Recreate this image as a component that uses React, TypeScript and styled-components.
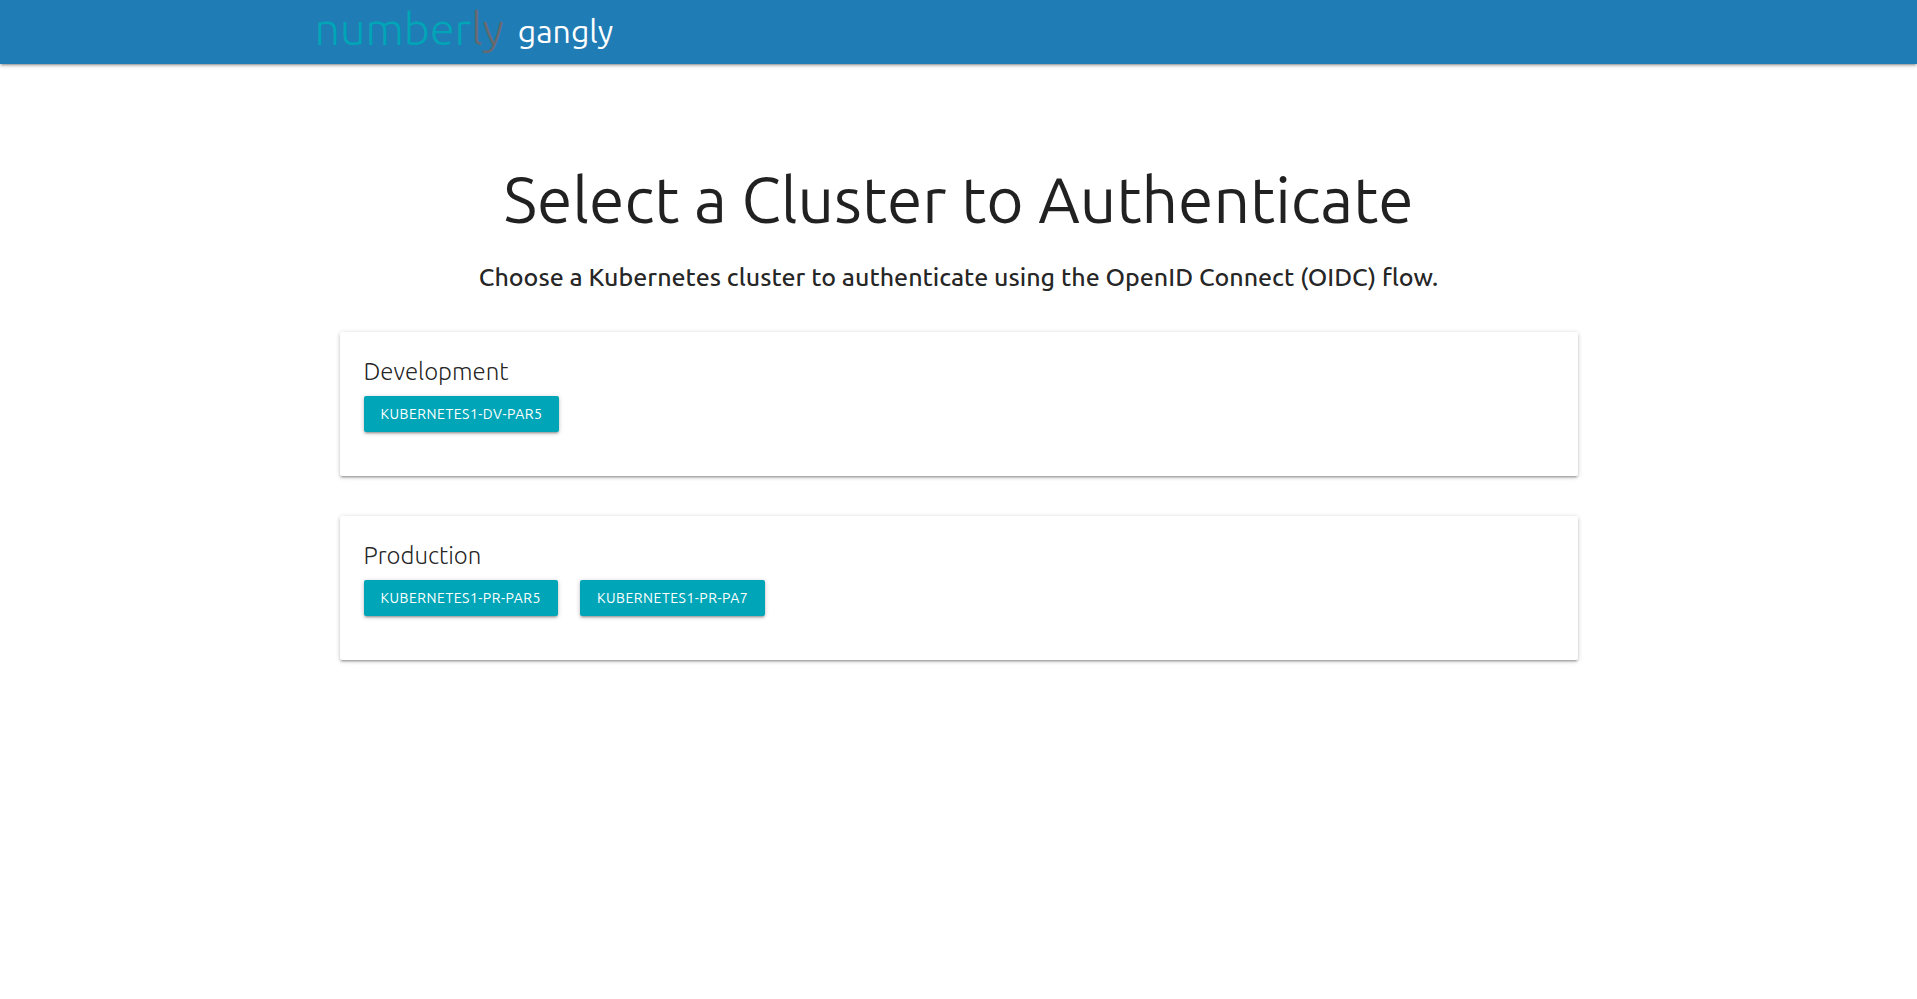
import React from "react";
import styled, { createGlobalStyle } from "styled-components";

const GlobalStyle = createGlobalStyle`
  *, *::before, *::after { box-sizing: border-box; }
  body {
    margin: 0;
    background: #fff;
    color: rgba(0, 0, 0, 0.87);
    font-family: Ubuntu, "Noto Sans", sans-serif;
  }
`;

const shadow =
  "0 2px 2px 0 rgba(0,0,0,0.14), 0 3px 1px -2px rgba(0,0,0,0.12), 0 1px 5px 0 rgba(0,0,0,0.2)";

const NavBar = styled.nav`
  height: 64px;
  background: #1f7cb5;
  box-shadow: ${shadow};
`;

const Container = styled.div`
  width: 70%;
  max-width: 1280px;
  margin: 0 auto;
`;

const NavContainer = styled(Container)`
  display: flex;
  align-items: flex-start;
`;

const Brand = styled.a`
  display: flex;
  gap: 14px;
  margin-left: -4px;
  color: #fff;
  font-size: 32px;
  line-height: 62px;
  text-decoration: none;
`;

const Logo = styled.span`
  color: #00a6b7;
  font-size: 45px;
  font-weight: 300;
  line-height: 58px;
`;

const LogoTail = styled.span`
  color: #6a696e;
`;

const Main = styled(Container).attrs({ as: "main" })`
  padding: 101px 21px 40px;
`;

const Title = styled.h1`
  margin: 0 0 30px;
  font-size: 64px;
  font-weight: 400;
  line-height: 68px;
  text-align: center;
`;

const Subtitle = styled.h2`
  margin: 0 0 41px;
  font-size: 25px;
  font-weight: 500;
  line-height: 28px;
  text-align: center;
`;

const Cards = styled.div`
  display: flex;
  flex-direction: column;
  gap: 40px;
`;

const Card = styled.section`
  padding: 24px 24px 44px;
  border-radius: 2px;
  background: #fff;
  box-shadow: ${shadow};
`;

const CardTitle = styled.h3`
  margin: 0 0 8px;
  font-size: 24px;
  font-weight: 300;
  line-height: 32px;
`;

const ClusterList = styled.div`
  display: flex;
  flex-wrap: wrap;
  gap: 22px;
`;

const ClusterLink = styled.a`
  height: 36px;
  padding: 0 17px;
  border-radius: 2px;
  background: #00a6b7;
  box-shadow: ${shadow};
  color: #fff;
  font-size: 14px;
  line-height: 36px;
  letter-spacing: 0.5px;
  text-decoration: none;
  text-transform: uppercase;
`;

const environments = [
  { name: "Development", clusters: ["kubernetes1-dv-par5"] },
  { name: "Production", clusters: ["kubernetes1-pr-par5", "kubernetes1-pr-pa7"] },
];

export default function App() {
  return (
    <>
      <GlobalStyle />
      <NavBar>
        <NavContainer>
          <Brand href="#">
            <Logo>
              number<LogoTail>ly</LogoTail>
            </Logo>
            gangly
          </Brand>
        </NavContainer>
      </NavBar>
      <Main>
        <Title>Select a Cluster to Authenticate</Title>
        <Subtitle>
          Choose a Kubernetes cluster to authenticate using the OpenID Connect (OIDC) flow.
        </Subtitle>
        <Cards>
          {environments.map((env) => (
            <Card key={env.name}>
              <CardTitle>{env.name}</CardTitle>
              <ClusterList>
                {env.clusters.map((cluster) => (
                  <ClusterLink key={cluster} href={`#${cluster}`}>
                    {cluster}
                  </ClusterLink>
                ))}
              </ClusterList>
            </Card>
          ))}
        </Cards>
      </Main>
    </>
  );
}
